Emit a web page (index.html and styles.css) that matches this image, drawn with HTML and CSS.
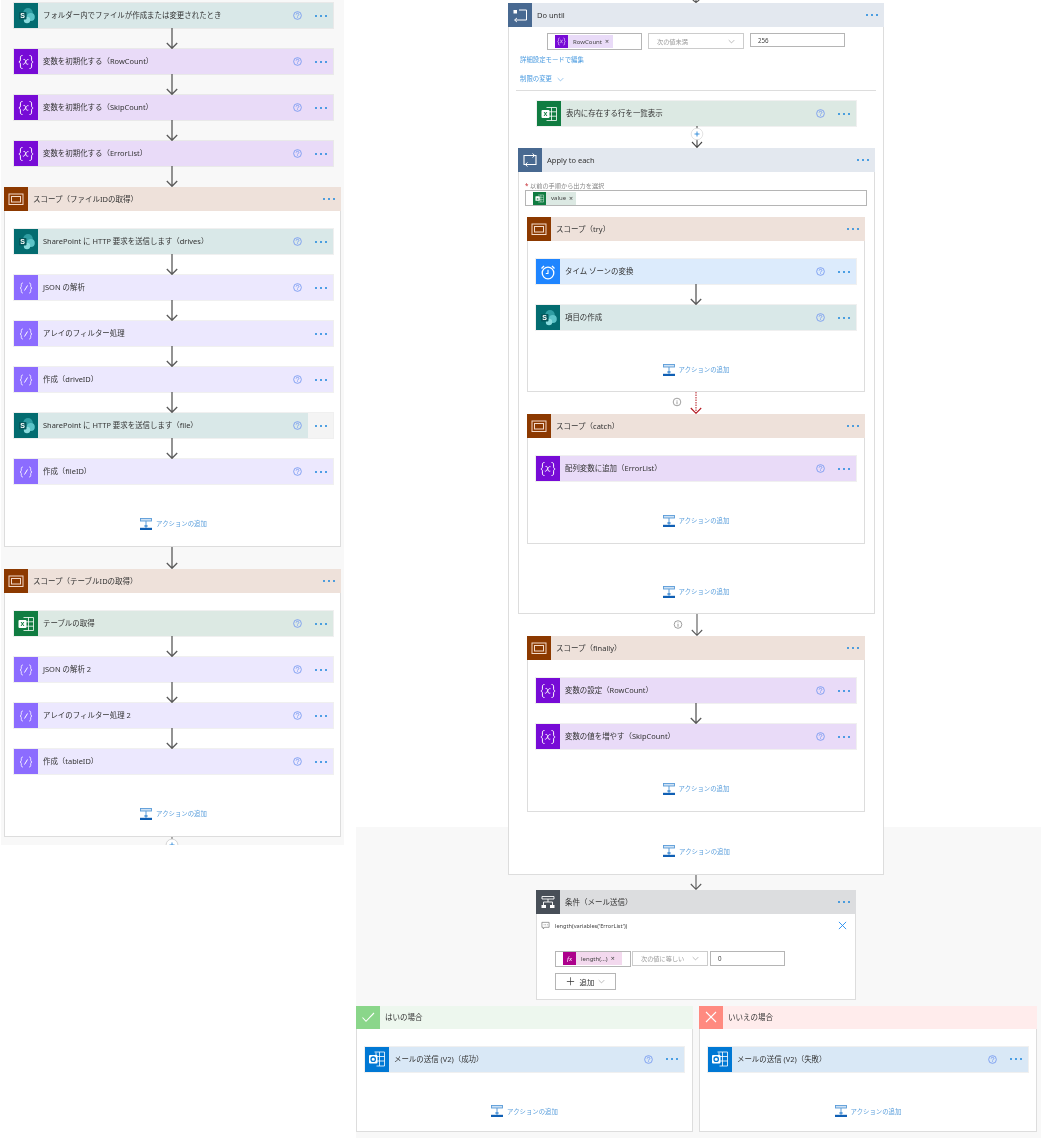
FILE: index.html
```html
<!DOCTYPE html>
<html lang="ja">
<head>
<meta charset="utf-8">
<title>Flow</title>
<link rel="stylesheet" href="styles.css">
</head>
<body>
<svg class="defs" xmlns="http://www.w3.org/2000/svg">
  <symbol id="i-sp" viewBox="0 0 24 24">
    <circle cx="14" cy="8.800" r="4.800" fill="#2f9ea3"/>
    <circle cx="16.800" cy="13" r="4" fill="#5cc4c8"/>
    <circle cx="13" cy="16" r="3.200" fill="#8adbdd"/>
    <rect x="5" y="8" width="7.500" height="7.500" rx="1" fill="#03585c"/>
    <text x="8.700" y="14" text-anchor="middle" class="tile-letter">S</text>
  </symbol>
  <symbol id="i-var" viewBox="0 0 24 24">
    <path d="M8.500 5.500c-1.800 0-2.100.9-2.100 2.400v2c0 1.200-.5 1.800-1.500 2.100 1 .3 1.500.9 1.500 2.100v2c0 1.500.3 2.400 2.100 2.400M15.500 5.500c1.800 0 2.100.9 2.100 2.400v2c0 1.200.5 1.800 1.500 2.100-1 .3-1.500.9-1.500 2.100v2c0 1.500-.3 2.400-2.100 2.400" fill="none" stroke="#fff" stroke-width="1"/>
    <path d="M9.500 9.500c1.500-.4 1.800.4 2.200 2.300.4 2 .8 2.900 2.600 2.300M14.500 9.700c-1.300-.5-2 .4-3 2.300s-1.700 2.700-2.700 2" fill="none" stroke="#fff" stroke-width=".9"/>
  </symbol>
  <symbol id="i-json" viewBox="0 0 24 24">
    <path d="M9 7c-1.500 0-1.700.7-1.700 1.800v1.600c0 .9-.4 1.300-1.300 1.600.9.300 1.300.7 1.300 1.600v1.600c0 1.100.2 1.800 1.700 1.800M15 7c1.500 0 1.700.7 1.700 1.800v1.600c0 .9.4 1.300 1.300 1.600-.9.300-1.300.7-1.300 1.600v1.600c0 1.100-.2 1.800-1.700 1.800" fill="none" stroke="#fff" stroke-width=".9" opacity=".85"/>
    <path d="M10.500 14.500l3-5" stroke="#fff" stroke-width="1" fill="none"/>
  </symbol>
  <symbol id="i-excel" viewBox="0 0 24 24">
    <path d="M9.500 5.500h10v13h-10M9.500 9.800h10M9.500 14.200h10M14.500 5.500v13" fill="none" stroke="#fff" stroke-width=".9" opacity=".9"/>
    <rect x="4.500" y="8" width="8" height="8" rx="1" fill="#fff"/>
    <text x="8.500" y="14.300" text-anchor="middle" class="tile-letter dark-green">x</text>
  </symbol>
  <symbol id="i-outlook" viewBox="0 0 24 24">
    <path d="M9.500 5h10v14h-8M11 5.500v4M14.500 5v14M9.500 9.500h10M9.500 14h10" fill="none" stroke="#fff" stroke-width=".9" opacity=".9"/>
    <rect x="4" y="8" width="8.500" height="8.500" rx="1" fill="#fff"/>
    <circle cx="8.200" cy="12.200" r="2.200" fill="none" stroke="#0078d4" stroke-width="1.300"/>
  </symbol>
  <symbol id="i-scope" viewBox="0 0 24 24">
    <rect x="5" y="7" width="14" height="10.500" fill="none" stroke="#f3d9c9" stroke-width="1"/>
    <rect x="7.500" y="9.500" width="9" height="5.500" fill="none" stroke="#f3d9c9" stroke-width="1"/>
  </symbol>
  <symbol id="i-until" viewBox="0 0 24 24">
    <path d="M11 7h7.500v10H7" fill="none" stroke="#fff" stroke-width="1"/>
    <path d="M9 15l-2.500 2 2.500 2" fill="none" stroke="#fff" stroke-width=".9"/>
    <rect x="5.500" y="7" width="3.500" height="3.500" fill="#fff"/>
  </symbol>
  <symbol id="i-each" viewBox="0 0 24 24">
    <path d="M8 16.500H6V7.500h10M16 7.500h2v9H8" fill="none" stroke="#fff" stroke-width="1.100"/>
    <path d="M14.500 5.500l2.200 2-2.200 2M9.500 14.500l-2.200 2 2.200 2" fill="none" stroke="#fff" stroke-width="1"/>
  </symbol>
  <symbol id="i-clock" viewBox="0 0 24 24">
    <circle cx="12" cy="13" r="5.800" fill="none" stroke="#fff" stroke-width="1.300"/>
    <path d="M12 9.800V13.500H9.800" fill="none" stroke="#fff" stroke-width="1.100"/>
    <path d="M5.500 8.500L8 6M18.500 8.500L16 6" stroke="#fff" stroke-width="1.300"/>
  </symbol>
  <symbol id="i-cond" viewBox="0 0 24 24">
    <path d="M6 6.500h12v2.500H6zM12 9v3M7.500 12v3M16.500 12v3M7.500 12h9" fill="none" stroke="#fff" stroke-width=".9"/>
    <rect x="5.500" y="15" width="4.500" height="3" fill="#fff"/>
    <rect x="14" y="15" width="4.500" height="3" fill="#fff"/>
  </symbol>
  <symbol id="i-check" viewBox="0 0 24 24">
    <path d="M6.500 12.500l3.500 3.800 8-8.300" fill="none" stroke="#fff" stroke-width="1.100"/>
  </symbol>
  <symbol id="i-cross" viewBox="0 0 24 24">
    <path d="M7 7l10 10M17 7L7 17" fill="none" stroke="#fff" stroke-width="1.100"/>
  </symbol>
  <symbol id="i-help" viewBox="0 0 10 10">
    <circle cx="5" cy="5" r="4.300" fill="none" stroke="#6f95f2" stroke-width=".9"/>
    <path d="M3.500 4c0-1 .7-1.500 1.500-1.500S6.500 3 6.500 3.900C6.500 5 5 5 5 6.200M5 7v.8" fill="none" stroke="#6f95f2" stroke-width=".9"/>
  </symbol>
  <symbol id="i-add" viewBox="0 0 12 12">
    <rect x=".5" y=".5" width="11" height="2.500" fill="#cfe2f5" stroke="#5a9bd8" stroke-width=".9"/>
    <path d="M6 3v7" stroke="#5a9bd8" stroke-width="1"/>
    <rect x="4.500" y="7" width="3" height="2" fill="#5a9bd8"/>
    <rect x="0" y="9.800" width="12" height="2.200" fill="#0f5fb4"/>
  </symbol>
  <symbol id="a21" viewBox="0 0 14 21">
    <path d="M7 0v20.300M1.800 15l5.200 5.300L12.200 15" fill="none" stroke="#5a5a5a" stroke-width="1.300"/>
  </symbol>
  <symbol id="a22" viewBox="0 0 14 22">
    <path d="M7 0v21.300M1.800 16l5.200 5.300L12.200 16" fill="none" stroke="#5a5a5a" stroke-width="1.300"/>
  </symbol>
  <symbol id="a15" viewBox="0 0 14 15">
    <path d="M7 0v14.300M1.800 9l5.200 5.300L12.200 9" fill="none" stroke="#5a5a5a" stroke-width="1.100"/>
  </symbol>
  <symbol id="a3" viewBox="0 0 14 3">
    <path d="M7 0v2.500M3.800 0l3.200 2.500L10.200 0" fill="none" stroke="#5a5a5a" stroke-width="1.100"/>
  </symbol>
  <symbol id="a22plus" viewBox="0 0 14 22">
    <path d="M7 0v22M2 16l5 5.300L12 16" fill="none" stroke="#444" stroke-width="1.100"/>
    <circle cx="7" cy="8" r="5.800" fill="#fff" stroke="#ddd" stroke-width=".8"/>
    <path d="M4.500 8h5M7 5.500v5" stroke="#2b88d8" stroke-width=".9"/>
  </symbol>
  <symbol id="a-info" viewBox="0 0 52 22">
    <path d="M26 0v21.300M20.800 16l5.200 5.300L31.200 16" fill="none" stroke="#5a5a5a" stroke-width="1.100"/>
    <circle cx="7" cy="10.500" r="3.800" fill="#fff" stroke="#777" stroke-width=".7"/>
    <path d="M7 9.800v3M7 8.500v.6" stroke="#777" stroke-width=".7"/>
  </symbol>
  <symbol id="a-info-red" viewBox="0 0 52 22">
    <path d="M26 0v21" fill="none" stroke="#b3171f" stroke-width="1" stroke-dasharray="1.500 1"/>
    <path d="M20.800 16l5.200 5.300L31.200 16" fill="none" stroke="#b3171f" stroke-width="1.100"/>
    <circle cx="7" cy="10" r="3.800" fill="#fff" stroke="#777" stroke-width=".7"/>
    <path d="M7 9.300v3M7 8v.6" stroke="#777" stroke-width=".7"/>
  </symbol>
  <symbol id="a-plus-end" viewBox="0 0 14 8">
    <path d="M7 0v2" stroke="#5a5a5a" stroke-width="1"/>
    <circle cx="7" cy="8" r="5.900" fill="#fff" stroke="#ccc" stroke-width=".8"/>
    <path d="M4.500 8h5M7 5.500v2.500" stroke="#2b88d8" stroke-width=".9"/>
  </symbol>
  <symbol id="i-chev" viewBox="0 0 10 6">
    <path d="M1 1l4 4 4-4" fill="none" stroke="currentColor" stroke-width=".8"/>
  </symbol>
  <symbol id="i-comment" viewBox="0 0 10 10">
    <path d="M1 1.500h8v5.500H4L2.500 8.800V7H1z" fill="none" stroke="#666" stroke-width=".7"/>
    <path d="M3 4.200h.8M4.800 4.200h.8M6.600 4.200h.8" stroke="#666" stroke-width=".8"/>
  </symbol>
</svg>

<div class="page">
  <main class="canvas-left">
    <section class="top-actions">
      <div class="card sp"><span class="ico"><svg class="glyph"><use href="#i-sp"/></svg></span><span class="title">フォルダー内でファイルが作成または変更されたとき</span><svg class="help"><use href="#i-help"/></svg><span class="more"><i></i><i></i><i></i></span></div>
      <div class="arrow"><svg class="a-21"><use href="#a21"/></svg></div>
      <div class="card var"><span class="ico"><svg class="glyph"><use href="#i-var"/></svg></span><span class="title">変数を初期化する（RowCount）</span><svg class="help"><use href="#i-help"/></svg><span class="more"><i></i><i></i><i></i></span></div>
      <div class="arrow"><svg class="a-21"><use href="#a21"/></svg></div>
      <div class="card var"><span class="ico"><svg class="glyph"><use href="#i-var"/></svg></span><span class="title">変数を初期化する（SkipCount）</span><svg class="help"><use href="#i-help"/></svg><span class="more"><i></i><i></i><i></i></span></div>
      <div class="arrow"><svg class="a-21"><use href="#a21"/></svg></div>
      <div class="card var"><span class="ico"><svg class="glyph"><use href="#i-var"/></svg></span><span class="title">変数を初期化する（ErrorList）</span><svg class="help"><use href="#i-help"/></svg><span class="more"><i></i><i></i><i></i></span></div>
      <div class="arrow"><svg class="a-21"><use href="#a21"/></svg></div>
    </section>

    <section class="scope left-scope">
      <div class="head scope-head"><span class="ico"><svg class="glyph"><use href="#i-scope"/></svg></span><span class="title">スコープ（ファイルIDの取得）</span><span class="more"><i></i><i></i><i></i></span></div>
      <div class="body">
        <div class="card sp"><span class="ico"><svg class="glyph"><use href="#i-sp"/></svg></span><span class="title">SharePoint に HTTP 要求を送信します（drives）</span><svg class="help"><use href="#i-help"/></svg><span class="more"><i></i><i></i><i></i></span></div>
        <div class="arrow"><svg class="a-21"><use href="#a21"/></svg></div>
        <div class="card json"><span class="ico"><svg class="glyph"><use href="#i-json"/></svg></span><span class="title">JSON の解析</span><svg class="help"><use href="#i-help"/></svg><span class="more"><i></i><i></i><i></i></span></div>
        <div class="arrow"><svg class="a-21"><use href="#a21"/></svg></div>
        <div class="card json"><span class="ico"><svg class="glyph"><use href="#i-json"/></svg></span><span class="title">アレイのフィルター処理</span><span class="more"><i></i><i></i><i></i></span></div>
        <div class="arrow"><svg class="a-21"><use href="#a21"/></svg></div>
        <div class="card json"><span class="ico"><svg class="glyph"><use href="#i-json"/></svg></span><span class="title">作成（driveID）</span><svg class="help"><use href="#i-help"/></svg><span class="more"><i></i><i></i><i></i></span></div>
        <div class="arrow"><svg class="a-21"><use href="#a21"/></svg></div>
        <div class="card sp"><span class="ico"><svg class="glyph"><use href="#i-sp"/></svg></span><span class="title">SharePoint に HTTP 要求を送信します（file）</span><svg class="help"><use href="#i-help"/></svg><span class="more hovered"><i></i><i></i><i></i></span></div>
        <div class="arrow"><svg class="a-21"><use href="#a21"/></svg></div>
        <div class="card json"><span class="ico"><svg class="glyph"><use href="#i-json"/></svg></span><span class="title">作成（fileID）</span><svg class="help"><use href="#i-help"/></svg><span class="more"><i></i><i></i><i></i></span></div>
        <div class="add"><svg class="add-ico"><use href="#i-add"/></svg><span>アクションの追加</span></div>
      </div>
    </section>

    <div class="arrow left-link"><svg class="a-22"><use href="#a22"/></svg></div>

    <section class="scope left-scope">
      <div class="head scope-head"><span class="ico"><svg class="glyph"><use href="#i-scope"/></svg></span><span class="title">スコープ（テーブルIDの取得）</span><span class="more"><i></i><i></i><i></i></span></div>
      <div class="body">
        <div class="card excel"><span class="ico"><svg class="glyph"><use href="#i-excel"/></svg></span><span class="title">テーブルの取得</span><svg class="help"><use href="#i-help"/></svg><span class="more"><i></i><i></i><i></i></span></div>
        <div class="arrow"><svg class="a-21"><use href="#a21"/></svg></div>
        <div class="card json"><span class="ico"><svg class="glyph"><use href="#i-json"/></svg></span><span class="title">JSON の解析 2</span><svg class="help"><use href="#i-help"/></svg><span class="more"><i></i><i></i><i></i></span></div>
        <div class="arrow"><svg class="a-21"><use href="#a21"/></svg></div>
        <div class="card json"><span class="ico"><svg class="glyph"><use href="#i-json"/></svg></span><span class="title">アレイのフィルター処理 2</span><svg class="help"><use href="#i-help"/></svg><span class="more"><i></i><i></i><i></i></span></div>
        <div class="arrow"><svg class="a-21"><use href="#a21"/></svg></div>
        <div class="card json"><span class="ico"><svg class="glyph"><use href="#i-json"/></svg></span><span class="title">作成（tableID）</span><svg class="help"><use href="#i-help"/></svg><span class="more"><i></i><i></i><i></i></span></div>
        <div class="add"><svg class="add-ico"><use href="#i-add"/></svg><span>アクションの追加</span></div>
      </div>
    </section>
    <div class="arrow left-link"><svg class="plus-end"><use href="#a-plus-end"/></svg></div>
  </main>

  <main class="canvas-right">
    <div class="main-flow">
      <div class="arrow"><svg class="a-3"><use href="#a3"/></svg></div>
      <section class="scope do-until">
        <div class="head loop-head"><span class="ico"><svg class="glyph"><use href="#i-until"/></svg></span><span class="title">Do until</span><span class="more"><i></i><i></i><i></i></span></div>
        <div class="body until-body">
          <div class="cond-row until-row">
            <div class="field f-tall"><span class="chip chip-var"><svg class="chip-ico"><use href="#i-var"/></svg><span class="chip-text">RowCount</span><span class="chip-x">×</span></span></div>
            <div class="field f-mid select"><span class="ph">次の値未満</span><svg class="chev"><use href="#i-chev"/></svg></div>
            <div class="field f-low"><span class="val">256</span></div>
          </div>
          <a class="link link-first">詳細設定モードで編集</a>
          <a class="link link-second">制限の変更<svg class="chev link-chev"><use href="#i-chev"/></svg></a>
          <hr class="divider">
          <div class="card excel centered"><span class="ico"><svg class="glyph"><use href="#i-excel"/></svg></span><span class="title">表内に存在する行を一覧表示</span><svg class="help"><use href="#i-help"/></svg><span class="more"><i></i><i></i><i></i></span></div>
          <div class="arrow"><svg class="a-22"><use href="#a22plus"/></svg></div>

          <section class="scope">
            <div class="head loop-head"><span class="ico"><svg class="glyph"><use href="#i-each"/></svg></span><span class="title">Apply to each</span><span class="more"><i></i><i></i><i></i></span></div>
            <div class="body each-body">
              <div class="req"><b>*</b> 以前の手順から出力を選択</div>
              <div class="field f-wide"><span class="chip chip-excel"><svg class="chip-ico"><use href="#i-excel"/></svg><span class="chip-text">value</span><span class="chip-x">×</span></span></div>

              <section class="scope first-inner">
                <div class="head scope-head"><span class="ico"><svg class="glyph"><use href="#i-scope"/></svg></span><span class="title">スコープ（try）</span><span class="more"><i></i><i></i><i></i></span></div>
                <div class="body even">
                  <div class="card time"><span class="ico"><svg class="glyph"><use href="#i-clock"/></svg></span><span class="title">タイム ゾーンの変換</span><svg class="help"><use href="#i-help"/></svg><span class="more"><i></i><i></i><i></i></span></div>
                  <div class="arrow"><svg class="a-21"><use href="#a21"/></svg></div>
                  <div class="card sp"><span class="ico"><svg class="glyph"><use href="#i-sp"/></svg></span><span class="title">項目の作成</span><svg class="help"><use href="#i-help"/></svg><span class="more"><i></i><i></i><i></i></span></div>
                  <div class="add"><svg class="add-ico"><use href="#i-add"/></svg><span>アクションの追加</span></div>
                </div>
              </section>
              <div class="arrow"><svg class="a-info"><use href="#a-info-red"/></svg></div>
              <section class="scope">
                <div class="head scope-head"><span class="ico"><svg class="glyph"><use href="#i-scope"/></svg></span><span class="title">スコープ（catch）</span><span class="more"><i></i><i></i><i></i></span></div>
                <div class="body even">
                  <div class="card var"><span class="ico"><svg class="glyph"><use href="#i-var"/></svg></span><span class="title">配列変数に追加（ErrorList）</span><svg class="help"><use href="#i-help"/></svg><span class="more"><i></i><i></i><i></i></span></div>
                  <div class="add"><svg class="add-ico"><use href="#i-add"/></svg><span>アクションの追加</span></div>
                </div>
              </section>
              <div class="add add-wide"><svg class="add-ico"><use href="#i-add"/></svg><span>アクションの追加</span></div>
            </div>
          </section>

          <div class="arrow"><svg class="a-info"><use href="#a-info"/></svg></div>

          <section class="scope inset">
            <div class="head scope-head"><span class="ico"><svg class="glyph"><use href="#i-scope"/></svg></span><span class="title">スコープ（finally）</span><span class="more"><i></i><i></i><i></i></span></div>
            <div class="body even">
              <div class="card var"><span class="ico"><svg class="glyph"><use href="#i-var"/></svg></span><span class="title">変数の設定（RowCount）</span><svg class="help"><use href="#i-help"/></svg><span class="more"><i></i><i></i><i></i></span></div>
              <div class="arrow"><svg class="a-21"><use href="#a21"/></svg></div>
              <div class="card var"><span class="ico"><svg class="glyph"><use href="#i-var"/></svg></span><span class="title">変数の値を増やす（SkipCount）</span><svg class="help"><use href="#i-help"/></svg><span class="more"><i></i><i></i><i></i></span></div>
              <div class="add"><svg class="add-ico"><use href="#i-add"/></svg><span>アクションの追加</span></div>
            </div>
          </section>
          <div class="add until-add"><svg class="add-ico"><use href="#i-add"/></svg><span>アクションの追加</span></div>
        </div>
      </section>

      <div class="arrow"><svg class="a-15"><use href="#a15"/></svg></div>

      <section class="scope condition">
        <div class="head cond-head"><span class="ico"><svg class="glyph"><use href="#i-cond"/></svg></span><span class="title">条件（メール送信）</span><span class="more"><i></i><i></i><i></i></span></div>
        <div class="cond-body">
          <div class="comment"><svg class="comment-ico"><use href="#i-comment"/></svg><span>length(variables('ErrorList'))</span><svg class="close" viewBox="0 0 10 10"><path d="M1 1l8 8M9 1L1 9" fill="none" stroke="#1f8bf0" stroke-width="1"/></svg></div>
          <div class="cond-row cond-fields">
            <div class="field f-a"><span class="chip chip-fx"><span class="fx">fx</span><span class="chip-text">length(...)</span><span class="chip-x">×</span></span></div>
            <div class="field f-b select"><span class="ph">次の値に等しい</span><svg class="chev"><use href="#i-chev"/></svg></div>
            <div class="field f-c"><span class="val">0</span></div>
          </div>
          <div class="add-btn"><span class="plus-mark">＋</span><span>追加</span><svg class="chev"><use href="#i-chev"/></svg></div>
        </div>
      </section>
    </div>

    <div class="branches">
      <section class="scope branch yes">
        <div class="head yes-head"><span class="ico"><svg class="glyph"><use href="#i-check"/></svg></span><span class="title">はいの場合</span></div>
        <div class="body even branch-body">
          <div class="card mail"><span class="ico"><svg class="glyph"><use href="#i-outlook"/></svg></span><span class="title">メールの送信 (V2)（成功）</span><svg class="help"><use href="#i-help"/></svg><span class="more"><i></i><i></i><i></i></span></div>
          <div class="add"><svg class="add-ico"><use href="#i-add"/></svg><span>アクションの追加</span></div>
        </div>
      </section>
      <section class="scope branch no">
        <div class="head no-head"><span class="ico"><svg class="glyph"><use href="#i-cross"/></svg></span><span class="title">いいえの場合</span></div>
        <div class="body even branch-body">
          <div class="card mail"><span class="ico"><svg class="glyph"><use href="#i-outlook"/></svg></span><span class="title">メールの送信 (V2)（失敗）</span><svg class="help"><use href="#i-help"/></svg><span class="more"><i></i><i></i><i></i></span></div>
          <div class="add"><svg class="add-ico"><use href="#i-add"/></svg><span>アクションの追加</span></div>
        </div>
      </section>
    </div>
  </main>
</div>
</body>
</html>
```

FILE: styles.css
```css
* { box-sizing: border-box; }
html, body { margin: 0; padding: 0; background: #fff; }
body {
  font-family: "Noto Sans", "Noto Sans CJK JP", sans-serif;
  color: #333;
  overflow: hidden;
}
.defs { display: none; }
.tile-letter { font: 700 7px "Liberation Sans", sans-serif; fill: #fff; }
.dark-green { fill: #107c41; }

.page {
  display: grid;
  grid-template-columns: 343px 685px;
  column-gap: 12px;
  padding-left: 1px;
  height: 1138px;
  overflow: hidden;
  filter: blur(.4px);
}

/* Left canvas */
.canvas-left {
  background: #f8f8f8;
  height: 845px;
  overflow: hidden;
  padding-top: 3px;
}
.top-actions { margin-left: 13px; width: 319px; display: flex; flex-direction: column; }
.canvas-left .arrow { padding-right: 3px; }
.left-scope { margin-left: 3px; width: 337px; }
.canvas-left .left-link { margin-left: 3px; width: 337px; padding-right: 1px; }

/* Right canvas */
.canvas-right {
  background: linear-gradient(#fff 827px, #f8f8f8 827px);
  display: flex;
  flex-direction: column;
}
.main-flow {
  margin-left: 152px;
  width: 376px;
  display: flex;
  flex-direction: column;
  align-items: center;
}
.do-until { width: 376px; }
.condition { width: 320px; }

/* Generic blocks */
.card, .head {
  display: flex;
  align-items: center;
  font-size: 7.45px;
  line-height: 1;
  white-space: nowrap;
}
.card { height: 25px; width: 100%; box-shadow: 0 0 0 1px rgba(0, 0, 0, .06); flex: none; }
.head { height: 24px; flex: none; font-size: 7.5px; }
.head .title { padding-top: 1px; }
.ico { width: 24px; height: 100%; display: flex; align-items: center; justify-content: center; flex: none; }
.glyph { width: 24px; height: 24px; display: block; }
.title { flex: 1; padding-left: 5px; }
.help { width: 9px; height: 9px; margin-right: 6px; flex: none; }
.more { width: 25px; height: 100%; display: flex; align-items: center; justify-content: center; gap: 3px; flex: none; }
.more i { width: 2px; height: 2px; border-radius: 50%; background: #1a86dc; }
.more.hovered { background: #f4f4f4; }

.sp { background: #d9e8e8; } .sp .ico { background: #036c70; }
.var { background: #e9dbf8; } .var .ico { background: #770bd6; }
.json { background: #ece8fe; } .json .ico { background: #8c6cff; }
.excel { background: #dce9e3; } .excel .ico { background: #107c41; }
.time { background: #dcebfc; } .time .ico { background: #1f85ff; }
.mail { background: #d9e8f6; } .mail .ico { background: #0078d4; }
.scope-head { background: #eee1da; } .scope-head .ico { background: #8c3900; }
.loop-head { background: #e3e8ef; } .loop-head .ico { background: #486991; }
.cond-head { background: #dcdddf; } .cond-head .ico { background: #484f58; }
.yes-head { background: #edf7ee; height: 23px; } .yes-head .ico { background: #8ad68a; }
.no-head { background: #ffecec; height: 23px; } .no-head .ico { background: #ff8a80; width: 24px; }

.scope { display: flex; flex-direction: column; background: #fff; }
.body {
  display: flex;
  flex-direction: column;
  border: 1px solid #ddd;
  border-top: 0;
  padding: 18px 7px 0 9px;
  background: #fff;
}
.body.even { padding-left: 8px; padding-right: 8px; }
.centered { width: 319px; align-self: center; }

.arrow { display: flex; justify-content: center; flex: none; }
.a-21 { width: 14px; height: 21px; display: block; }
.a-22 { width: 14px; height: 22px; display: block; }
.a-15 { width: 14px; height: 15px; display: block; }
.a-3 { width: 14px; height: 3px; display: block; }
.a-info { width: 52px; height: 22px; display: block; }
.plus-end { width: 14px; height: 8px; display: block; }

.add {
  display: flex;
  align-items: center;
  justify-content: center;
  gap: 4px;
  height: 20px;
  margin: 29.5px 0 12.5px;
  font-size: 6.4px;
  color: #5b9fdc;
  white-space: nowrap;
}
.add-ico { width: 12px; height: 12px; flex: none; }
.canvas-right .add { margin-bottom: 11.8px; }
.canvas-right .add-wide { margin: 38px 0 11.7px; }
.canvas-right .until-add { margin-bottom: 12.9px; }
.canvas-right .branch-body .add { margin-bottom: 9.5px; }

/* Do until */
.until-body { padding: 6px 8px 0 9px; }
.cond-row { display: flex; align-items: flex-start; flex: none; }
.until-row { margin-left: 29px; gap: 6px; }
.field {
  display: flex;
  align-items: center;
  border: 1px solid #b5b5b5;
  background: #fff;
  font-size: 6.2px;
  white-space: nowrap;
  flex: none;
}
.f-tall { width: 95px; height: 17px; padding-left: 7px; }
.f-mid { width: 96px; height: 16px; border-color: #ccc; }
.f-low { width: 95px; height: 14px; }
.f-wide { width: 342px; height: 16px; margin-left: -2px; padding-left: 7px; }
.select { padding: 0 8px; justify-content: space-between; }
.ph { color: #999; }
.val { padding-left: 7px; color: #444; }
.chev { width: 7px; height: 5px; color: #888; flex: none; }

.chip { display: flex; align-items: center; height: 13px; color: #444; font-size: 6px; }
.chip-ico { width: 13px; height: 13px; flex: none; }
.chip-text { padding: 0 3px 0 5px; }
.chip-x { font-size: 7px; line-height: 1; }
.chip-var { background: #e9dbf8; width: 58px; }
.chip-var .chip-ico { background: #770bd6; }
.chip-excel { background: #dce9e3; width: 43px; }
.chip-excel .chip-ico { background: #107c41; }
.chip-fx { background: #f3d9ee; width: 59px; }
.fx {
  width: 13px; height: 13px; flex: none; background: #ad008c; color: #fff;
  font: italic 7px "Liberation Serif", serif; display: flex; align-items: center; justify-content: center;
}

.link { display: block; height: 10px; line-height: 10px; font-size: 6.4px; color: #4a9be0; margin-left: 2px; white-space: nowrap; }
.link-first { margin-top: 5px; }
.link-second { margin-top: 9px; display: flex; align-items: center; }
.link-chev { margin-left: 5px; color: #4a9be0; }
.divider { border: 0; height: 1px; background: #ddd; width: 360px; margin: 6px 0 10px -2px; flex: none; }

.each-body { padding: 0 9px 0 8px; }
.req { font-size: 6.2px; color: #888; margin: 10px 0 0 -2px; height: 8px; line-height: 8px; white-space: nowrap; }
.req b { color: #c4262e; font-weight: 400; }
.first-inner { margin-top: 11px; }
.inset { width: 338px; align-self: center; margin-left: -1px; }

/* Condition */
.cond-body { border: 1px solid #ddd; border-top: 0; height: 86px; background: #fff; padding-left: 4px; }
.comment { display: flex; align-items: center; height: 10px; margin-top: 7px; font-size: 5.6px; color: #444; white-space: nowrap; }
.comment-ico { width: 9px; height: 9px; margin-right: 5px; flex: none; }
.close { width: 9px; height: 9px; margin-left: auto; margin-right: 8px; flex: none; }
.cond-fields { margin: 20px 0 0 14px; gap: 1px; }
.f-a { width: 76px; height: 16px; padding-left: 7px; }
.f-b { width: 76px; height: 15px; border-color: #ccc; }
.f-c { width: 75px; height: 15px; margin-left: 1px; }
.add-btn {
  display: flex; align-items: center; justify-content: center; gap: 4px;
  width: 61px; height: 17px; margin: 6px 0 0 14px;
  border: 1px solid #b5b5b5; font-size: 7.4px; white-space: nowrap;
}
.plus-mark { font-size: 10px; line-height: 1; }

/* Branches */
.branches { display: flex; gap: 6px; margin-top: 6px; }
.yes { width: 337px; }
.no { width: 338px; }
```
